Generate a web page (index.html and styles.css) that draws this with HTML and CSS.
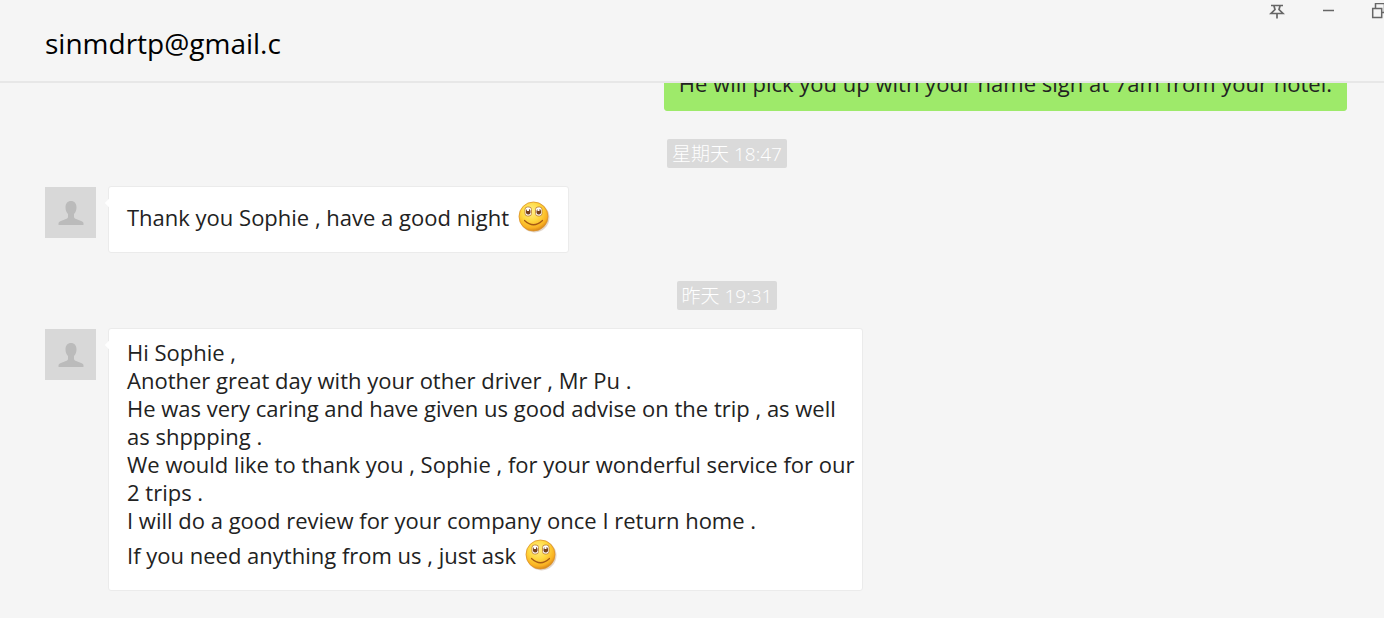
FILE: index.html
```html
<!DOCTYPE html>
<html lang="zh-CN">
<head>
<meta charset="utf-8">
<title>sinmdrtp@gmail.c</title>
<link rel="stylesheet" href="styles.css">
</head>
<body>
<svg width="0" height="0" class="defs" aria-hidden="true">
	<defs>
		<radialGradient id="face" cx="0.42" cy="0.32" r="0.68">
			<stop offset="0" stop-color="#fff08a"/>
			<stop offset="0.5" stop-color="#ffd83f"/>
			<stop offset="0.85" stop-color="#f9b021"/>
			<stop offset="1" stop-color="#d98a1c"/>
		</radialGradient>
		<symbol id="smile" viewBox="0 0 32 32">
			<ellipse cx="16.500" cy="16.500" rx="15" ry="15" fill="#8a5a30" opacity="0.25"/>
			<circle cx="15.500" cy="15.500" r="14.500" fill="url(#face)" stroke="#dc9228" stroke-width="0.8"/>
			<rect x="7" y="6" width="6.500" height="9" rx="2.500" fill="#fff" stroke="#b9782c" stroke-width="0.8"/>
			<rect x="17.500" y="6" width="6.500" height="9" rx="2.500" fill="#fff" stroke="#b9782c" stroke-width="0.8"/>
			<rect x="8" y="8" width="4.500" height="5.500" rx="2" fill="#75401c"/>
			<rect x="18.500" y="8" width="4.500" height="5.500" rx="2" fill="#75401c"/>
			<path d="M9 8h2v2h-2zM19.500 8h2v2h-2z" fill="#fff"/>
			<path d="M6.500 19.500q9 8.500 18 0" fill="none" stroke="#a65a14" stroke-width="1.200" stroke-linecap="round"/>
		</symbol>
		<symbol id="person" viewBox="0 0 51 51">
			<path d="M26 14c-3.500 0-5.500 2.500-5.500 6.500 0 3 1 5 2.500 6.500v3c0 1.500-2 2-4.500 3-3 1-5 1.500-5 3.500v1.500h25v-1.500c0-2-2-2.500-5-3.500-2.500-1-4.500-1.500-4.500-3v-3c1.500-1.500 2.500-3.500 2.500-6.500 0-4-2-6.500-5.500-6.500z" fill="#bbb"/>
		</symbol>
	</defs>
</svg>

<div class="app">
	<header class="header">
		<h1 class="title">sinmdrtp@gmail.c</h1>
		<div class="winButtons">
			<button type="button" aria-label="置顶">
				<svg width="16" height="16" viewBox="0 0 16 16" fill="none" stroke="#666" stroke-width="1.700"><path d="M2 2.500h12M5 3l1 3.500-4 4h12l-4-4L11 3M8 10.500v5"/></svg>
			</button>
			<button type="button" aria-label="最小化">
				<svg width="16" height="16" viewBox="0 0 16 16" fill="none" stroke="#666" stroke-width="1.500"><path d="M3 7.500h11"/></svg>
			</button>
			<button type="button" aria-label="还原">
				<svg width="16" height="16" viewBox="0 0 16 16" fill="none" stroke="#666" stroke-width="1.500"><path d="M1.700 6.500h9v9h-9zM4.500 6.500v-5h9v9h-3" transform="translate(0 -1)"/></svg>
			</button>
		</div>
	</header>

	<main class="chat">
		<div class="bubble mine">He will pick you up with your name sign at 7am from your hotel.</div>

		<time class="stamp">星期天 18:47</time>
		<div class="message">
			<svg class="avatar"><use href="#person"/></svg>
			<div class="bubble">Thank you Sophie , have a good night <svg class="emoji"><use href="#smile"/></svg></div>
		</div>

		<time class="stamp">昨天 19:31</time>
		<div class="message">
			<svg class="avatar"><use href="#person"/></svg>
			<div class="bubble">Hi Sophie ,<br>
			Another great day with your other driver , Mr Pu .<br>
			He was very caring and have given us good advise on the trip , as well as shppping .<br>
			We would like to thank you , Sophie , for your wonderful service for our 2 trips .<br>
			I will do a good review for your company once I return home .<br>
			If you need anything from us , just ask <svg class="emoji"><use href="#smile"/></svg></div>
		</div>
	</main>
</div>
</body>
</html>
```
FILE: styles.css
```css
* {
	box-sizing: border-box;
}
body {
	margin: 0;
	overflow: hidden;
	background: #f5f5f5;
	color: #222;
	font: 22px/28px "Open Sans", "Noto Sans CJK SC", sans-serif;
}
.defs {
	position: absolute;
}
/* the window runs a little past the right edge of the screen */
.app {
	display: flex;
	flex-direction: column;
	height: 100vh;
	margin-right: -25px;
}
.header {
	display: flex;
	flex: none;
	justify-content: space-between;
	height: 83px;
	padding-left: 45px;
	border-bottom: 2px solid #e7e7e7;
}
.title {
	margin: 23px 0 0;
	color: #000;
	font-size: 28px;
	font-weight: normal;
	line-height: 40px;
}
.winButtons {
	display: flex;
	gap: 35px;
	padding: 3px 22px 0 0;
}
.winButtons button {
	width: 16px;
	height: 16px;
	padding: 0;
	border: 0;
	background: none;
}
.winButtons svg {
	display: block;
}

/* newest message stays at the bottom */
.chat {
	display: flex;
	flex: 1;
	flex-direction: column;
	justify-content: flex-end;
	min-height: 0;
	padding: 0 0 27px 45px;
	overflow: hidden;
}
.stamp {
	align-self: center;
	margin: 28px 0 18px;
	padding: 1px 5px 0;
	border-radius: 2px;
	background: #dadada;
	color: #fff;
	font-size: 19px;
	font-weight: 300;
	line-height: 28px;
}
.message {
	display: flex;
	align-items: flex-start;
	gap: 12px;
}
.avatar {
	flex: none;
	width: 51px;
	height: 51px;
	margin-top: 1px;
	background: #d8d8d8;
}
.bubble {
	position: relative;
	max-width: 755px;
	padding: 9px 4px 11px 18px;
	border: 1px solid #ebebeb;
	border-radius: 3px;
	background: #fff;
}
.message .bubble::before {
	content: "";
	position: absolute;
	top: 13px;
	left: -3px;
	width: 6px;
	height: 6px;
	background: #fff;
	transform: rotate(45deg);
}
.mine {
	align-self: flex-end;
	margin-right: 62px;
	padding: 11px 14px 13px;
	border-color: #9eea6a;
	background: #9eea6a;
}
.emoji {
	width: 32px;
	height: 32px;
	margin: 5px 14px 8px 3px;
	vertical-align: -15px;
}
```
